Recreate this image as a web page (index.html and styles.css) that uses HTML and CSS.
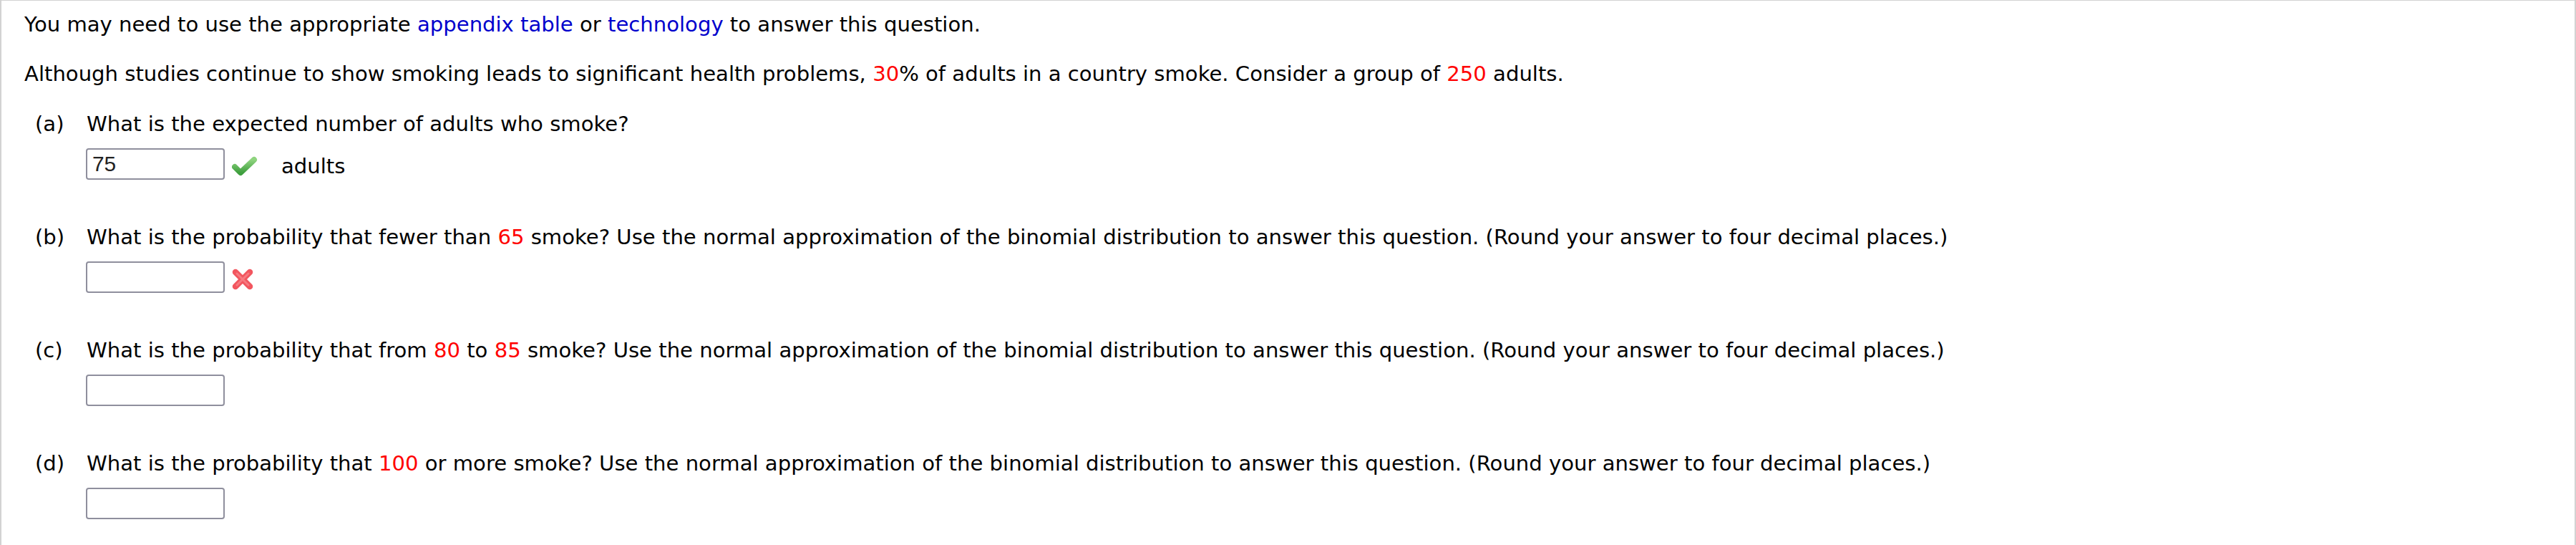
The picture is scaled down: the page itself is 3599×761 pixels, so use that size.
FILE: index.html
```html
<!DOCTYPE html>
<html lang="en">
<head>
	<meta charset="UTF-8">
	<title>Question</title>
	<link rel="stylesheet" href="styles.css">
</head>
<body>
	<div class="question">
		<p class="intro">You may need to use the appropriate <a href="javascript:;">appendix table</a> or <a href="javascript:;">technology</a> to answer this question.</p>
		<p class="intro">Although studies continue to show smoking leads to significant health problems, <span class="num">30</span>% of adults in a country smoke. Consider a group of <span class="num">250</span> adults.</p>

		<div class="part">
			<span class="label">(a)</span>
			<p class="text">What is the expected number of adults who smoke?</p>
			<div class="answer">
				<input type="text" value="75">
				<svg class="mark" width="36" height="28" viewBox="0 0 36 28">
					<defs>
						<linearGradient id="ok" x1="0" y1="0" x2="0" y2="1">
							<stop offset="0" stop-color="#8fd47f"/>
							<stop offset="1" stop-color="#3f9f3f"/>
						</linearGradient>
					</defs>
					<polyline points="4,15 12,23 31,5" fill="none" stroke="url(#ok)" stroke-width="8" stroke-linecap="round" stroke-linejoin="round"/>
				</svg>
				<span class="unit">adults</span>
			</div>
		</div>

		<div class="part">
			<span class="label">(b)</span>
			<p class="text">What is the probability that fewer than <span class="num">65</span> smoke? Use the normal approximation of the binomial distribution to answer this question. (Round your answer to four decimal places.)</p>
			<div class="answer">
				<input type="text" value="">
				<svg class="mark cross" width="32" height="32" viewBox="0 0 32 32">
					<g stroke="#f2565f" stroke-width="8.5" stroke-linecap="round">
						<line x1="6" y1="6" x2="26" y2="26"/>
						<line x1="26" y1="6" x2="6" y2="26"/>
					</g>
					<g stroke="#f77a80" stroke-width="3" stroke-linecap="round">
						<line x1="8" y1="8" x2="24" y2="24"/>
						<line x1="24" y1="8" x2="8" y2="24"/>
					</g>
				</svg>
			</div>
		</div>

		<div class="part">
			<span class="label">(c)</span>
			<p class="text">What is the probability that from <span class="num">80</span> to <span class="num">85</span> smoke? Use the normal approximation of the binomial distribution to answer this question. (Round your answer to four decimal places.)</p>
			<div class="answer">
				<input type="text" value="">
			</div>
		</div>

		<div class="part">
			<span class="label">(d)</span>
			<p class="text">What is the probability that <span class="num">100</span> or more smoke? Use the normal approximation of the binomial distribution to answer this question. (Round your answer to four decimal places.)</p>
			<div class="answer">
				<input type="text" value="">
			</div>
		</div>
	</div>
</body>
</html>
```

FILE: styles.css
```css
*{
	margin:0;
	padding:0;
	box-sizing:border-box;
}
html,body{
	background:#fff;
}
body{
	font-family:Verdana,"DejaVu Sans",sans-serif;
	font-size:29.1px;
	line-height:36px;
	color:#000;
}
a{
	color:#0000cc;
	text-decoration:none;
}
.num{
	color:#f00;
}
.question{
	min-height:761px;
	border:2px solid #d2d2d2;
	border-top-width:1px;
	border-bottom:none;
	padding:15px 32px 0;
}
.intro{
	margin-bottom:33px;
}
.intro + .intro{
	margin-bottom:34px;
}
.part{
	display:grid;
	grid-template-columns:72px 1fr;
	row-gap:16px;
	margin-left:15px;
	margin-bottom:62px;
}
.part .label{
	grid-column:1;
	grid-row:1;
}
.part .text{
	grid-column:2;
	grid-row:1;
}
.answer{
	grid-column:2;
	grid-row:2;
	display:flex;
	align-items:center;
	height:44px;
	margin-left:-1px;
}
.answer input{
	width:194px;
	height:44px;
	border:2px solid #8f8f9d;
	border-radius:4px;
	padding:0 7px;
	font-family:"Liberation Sans",Arial,sans-serif;
	font-size:29.8px;
	color:#222;
	background:#fff;
}
.mark{
	margin-left:10px;
	margin-top:6px;
}
.mark.cross{
	margin-top:6px;
	margin-left:9px;
}
.unit{
	margin-left:33px;
	margin-top:6px;
}
```
